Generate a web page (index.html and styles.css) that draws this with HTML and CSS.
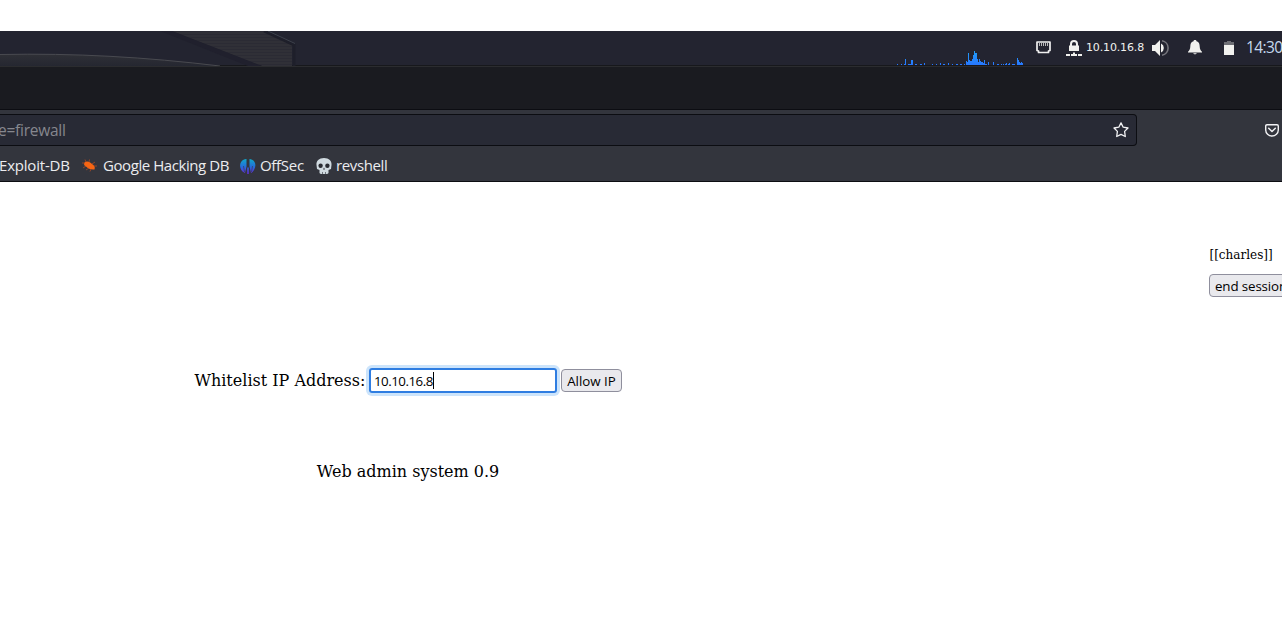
FILE: index.html
```html
<!DOCTYPE html>
<html lang="en">
<head>
<meta charset="utf-8">
<title>Web admin system</title>
<link rel="stylesheet" href="styles.css">
</head>
<body>
<header class="panel">
  <svg class="wallpaper" width="320" height="36" viewBox="0 0 320 36">
    <defs>
      <pattern id="scan" width="4" height="3" patternUnits="userSpaceOnUse"><rect width="4" height="3" fill="#303037"/><rect width="4" height="1" fill="#2b2b34"/></pattern>
      <linearGradient id="hill" x2="0" y2="1"><stop offset="0" stop-color="#2f3036"/><stop offset="1" stop-color="#252731"/></linearGradient>
    </defs>
    <path d="M0 23.5C75 22 145 26 220 35H0Z" fill="url(#hill)"/>
    <path d="M0 23.5C75 22 145 26 220 35" fill="none" stroke="#494a50"/>
    <path d="M172 0H267L292 14V35H262Z" fill="url(#scan)"/>
    <path d="M160 0H172L262 35H248Z" fill="#20202d"/>
    <path d="M264 0L294 14V35" fill="none" stroke="#1e1f2a" stroke-width="3"/>
    <path d="M268 0L295 12.500" fill="none" stroke="#3d414b"/>
  </svg>
  <svg class="graph" id="graph" width="127" height="16" viewBox="0 0 127 16" shape-rendering="crispEdges">
    <defs><linearGradient id="load" gradientUnits="userSpaceOnUse" x1="0" y1="0" x2="0" y2="16"><stop offset="0" stop-color="#20a4f5"/><stop offset="1" stop-color="#2777ff"/></linearGradient></defs>
    <path fill="url(#load)" d="M0 15h1v1h-1zM4 15h1v1h-1zM7 15h1v1h-1zM8 10h1v6h-1zM11 15h1v1h-1zM12 15h1v1h-1zM14 11h2v5h-2zM13 15h1v1h-1zM18 15h2v1h-2zM23 15h2v1h-2zM27 15h1v1h-1zM35 15h1v1h-1zM39 15h1v1h-1zM43 15h1v1h-1zM46 15h2v1h-2zM51 15h1v1h-1zM55 15h1v1h-1zM59 15h2v1h-2zM63 15h2v1h-2zM67 15h1v1h-1zM43 14h1v2h-1zM51 14h1v2h-1zM27 14h1v2h-1z"/>
    <path fill="url(#load)" d="M69 16V12h1v1h1V4h1v7h1v1h2v-2h1V6h1V2h1v2h2v6h1v3h1v-3h1v2h1v1h2v1h1v-3h1v4h2v1zM91 13h1v3h-1zM96 13h1v3h-1zM100 15h2v1h-2zM104 15h1v1h-1zM106 15h1v1h-1zM108 15h1v1h-1zM109 14h1v2h-1zM111 15h1v1h-1zM112 14h1v2h-1zM115 15h3v1h-3zM120 16V9h1v2h1v2h1v1h1v-1h1v1h1v2z"/>
  </svg>
  <svg class="ethernet" width="15" height="13" viewBox="0 0 15 13"><path d="M1 1H14V9.500L12.500 10V11.500H2.500V10L1 9.500Z" fill="none" stroke="#f0f0f0" stroke-width="1.700" stroke-linejoin="round"/><path d="M3.500 2v3M5.500 2v3M7.500 2v3M9.500 2v3M11.500 2v3" stroke="#ddd" stroke-width=".8"/></svg>
  <svg class="vpn" width="16" height="16" viewBox="0 0 16 16"><path d="M5 6V4A3 3 0 0 1 11 4V6" fill="none" stroke="#f1f1ee" stroke-width="2"/><path d="M3 5.500H13V11H3ZM0 14H4V16H0ZM12 14H16V16H12ZM5 14H7V12.500H9V14H11V16H5Z" fill="#f1f1ee"/></svg>
  <span class="vpn-ip">10.10.16.8</span>
  <svg class="volume" width="18" height="16" viewBox="0 0 18 16"><path d="M0 5H3L8 0V16L3 11H0Z" fill="#f1f1ee"/><path d="M9 3.500A5 5 0 0 1 9 12.500Z" fill="#f1f1ee"/><path d="M10 .8A7.300 7.300 0 0 1 10 15.200" fill="none" stroke="#74747b" stroke-width="1.600"/></svg>
  <svg class="bell" width="14" height="15" viewBox="0 0 14 15"><path d="M7 0C8 0 8.400.5 8.500 1.200C11.200 2 11.600 4 11.700 6.500C11.800 9 12.500 10.200 14 11.800V12.500H0V11.800C1.500 10.200 2.200 9 2.300 6.500C2.400 4 2.800 2 5.500 1.200C5.600.5 6 0 7 0ZM5.300 13.200H8.700C8.500 14.500 5.500 14.500 5.300 13.200Z" fill="#f1f1ee"/></svg>
  <svg class="battery" width="10" height="14" viewBox="0 0 10 14"><path d="M0 1H3V0H7V1H10V5H0Z" fill="#6d6e74"/><path d="M0 4H10V14H0Z" fill="#f1f1ee"/></svg>
  <span class="clock">14:30</span>
</header>
<div class="titlebar"></div>
<nav class="toolbar">
  <div class="urlbar"><span>e=firewall</span>
    <svg width="16" height="16" viewBox="0 0 16 16"><path d="M8 .9L10.200 5.200L15 6L11.600 9.400L12.300 14.500L8 12.300L3.700 14.500L4.400 9.400L1 6L5.800 5.200Z" fill="none" stroke="#f2f2f4" stroke-width="1.300" stroke-linejoin="round"/></svg>
  </div>
  <svg class="pocket" width="14" height="13" viewBox="0 0 14 13"><path d="M2 .7H12Q13.300.7 13.300 2V6A6.300 6 0 0 1 .7 6V2Q.7.700 2 .7Z" fill="none" stroke="#f2f2f4" stroke-width="1.400"/><path d="M3.700 4.300L7 7.500L10.300 4.300" fill="none" stroke="#f2f2f4" stroke-width="1.500" stroke-linecap="round" stroke-linejoin="round"/></svg>
</nav>
<div class="bookmarks">
  <span class="label exploit">Exploit-DB</span>
  <svg class="bug" width="15" height="13" viewBox="0 0 15 13"><path d="M2.500 3.500C5 1.500 8 3 10 5C12 6 13.500 8 12.500 10.500C9 11 6 9.500 4 7.500C2 6.500 1.500 5 2.500 3.500Z" fill="#f76513"/><path d="M4 3L3 .5M7 3L7.500.5M10 5L13 3M12 7H15M3 4H0M4 7L1 9M7 9L4 11M9 10L8 12.500" stroke="#b94e22" stroke-width=".7"/></svg>
  <span class="label google">Google Hacking DB</span>
  <svg class="offsec" width="16" height="16" viewBox="0 0 16 16"><defs><linearGradient id="os" x2="0" y2="1"><stop stop-color="#10a8c9"/><stop offset=".5" stop-color="#246fd9"/><stop offset="1" stop-color="#6428db"/></linearGradient></defs><path d="M6.500 1V8.500L5 15C-1.300 12 -1.500 4 4 1.500C5 1 5.700.8 6.500 1ZM9.500 1C15 1.500 17 7 14 12C13 13.500 12 14.500 11 15L9.500 8.500ZM7.200 9.500H8.800V16H7.200Z" fill="url(#os)"/><path d="M3.500 8L4.500 14M12.500 8L11.500 14" stroke="#33353d" stroke-width=".6"/></svg>
  <span class="label off">OffSec</span>
  <svg class="skull" width="16" height="16" viewBox="0 0 16 16"><path d="M8 0C13 0 16 3 15.500 7L15 11L12.500 12V15Q12 16 10.500 16H5.500Q4 16 3.500 15V12L1 11L.5 7C0 3 3 0 8 0Z" fill="#d0dae0"/><ellipse cx="4.600" cy="7.800" rx="2.200" ry="2.200" fill="#2a2c33"/><ellipse cx="11.400" cy="7.800" rx="2.200" ry="2.200" fill="#2a2c33"/><path d="M8 9.500L9 11.500H7ZM6 14H6.600V16H6ZM9.400 14H10V16H9.400Z" fill="#33353d"/></svg>
  <span class="label rev">revshell</span>
</div>
<main class="page">
  <section class="session"><span class="user">[[charles]]</span><button class="btn end">end session</button></section>
  <section class="content">
    <form class="whitelist">
      <span class="serif field-label">Whitelist IP Address:</span>
      <div class="field"><span class="value">10.10.16.8</span><i class="caret"></i></div>
      <button class="btn allow" type="button">Allow IP</button>
    </form>
    <span class="serif version">Web admin system 0.9</span>
  </section>
</main>
</body>
</html>
```
FILE: styles.css
```css
* { box-sizing: border-box; }
body { margin: 0; width: 1282px; height: 633px; overflow: hidden; padding-top: 31px; background: #fff; font-family: "Open Sans", "Noto Sans", sans-serif; }
svg { display: block; flex: none; }
span { white-space: nowrap; }
.panel { height: 36px; display: flex; align-items: flex-start; background: #232430; border-bottom: 1px solid #2b2c2f; box-shadow: inset 0 -1px #17181c; overflow: hidden; }
.graph { margin: 18px 0 0 577px; }
.ethernet { margin: 10px 0 0 12px; }
.vpn { margin: 9px 0 0 15px; }
.vpn-ip { width: 58px; margin: 8px 0 0 4px; font: 11px/17px "DejaVu Sans", sans-serif; letter-spacing: -.15px; color: #f1f1ee; }
.volume { margin: 9px 0 0 8px; }
.bell { margin: 9px 0 0 18px; }
.battery { margin: 10px 0 0 22px; }
.clock { margin: 5px 0 0 12px; font-size: 15.5px; line-height: 22px; letter-spacing: -.6px; color: #c5d9ee; }
.titlebar { height: 42px; background: #1a1b20; }
.toolbar { height: 37px; display: flex; align-items: flex-start; background: #33353d; border-top: 1px solid #0c0d12; }
.urlbar { width: 1137px; height: 32px; margin-top: 4px; padding-right: 7px; display: flex; align-items: center; justify-content: space-between; background: #282a35; border: 1px solid #0c0d12; border-left: 0; border-radius: 0 4px 4px 0; }
.urlbar span { margin-left: -2px; font-size: 15.5px; line-height: 22px; letter-spacing: -.25px; color: #86878e; }
.pocket { margin: 14px 0 0 128px; }
.bookmarks { height: 36px; display: flex; align-items: center; padding-top: 4px; background: #33353d; border-bottom: 1px solid #0c0d12; }
.label { padding-bottom: 2px; font-size: 15px; line-height: 22px; letter-spacing: -.2px; color: #ececef; }
.exploit { width: 71px; margin-left: -1px; }
.bug { margin-left: 12px; }
.google { width: 126px; margin-left: 6px; letter-spacing: -.43px; }
.offsec { margin-left: 11px; }
.off { width: 44px; margin-left: 4px; letter-spacing: -.3px; }
.skull { margin-left: 12px; }
.rev { margin-left: 4px; letter-spacing: -.37px; }
.page { height: 451px; background: #fff; }
.session { display: flex; flex-direction: column; align-items: flex-start; padding: 65px 0 0 1209px; }
.user { margin-left: .5px; font: 12px/17px "DejaVu Serif", serif; color: #000; }
.btn { height: 23px; padding: 0 5px; border: 1px solid #8f8f9d; border-radius: 4px; background: #e9e9ed; color: #000; font: 13.33px/20px "Open Sans", "Noto Sans", sans-serif; white-space: nowrap; }
.end { margin-top: 10px; width: 83px; text-align: left; letter-spacing: -.12px; }
.content { width: 816px; margin-top: 69px; display: flex; flex-direction: column; align-items: center; }
.serif { font: 16px/20px "DejaVu Serif", serif; color: #000; }
.whitelist { display: flex; align-items: center; width: 428px; height: 29px; }
.field-label { width: 170.5px; margin-left: .5px; }
.field { display: flex; align-items: center; width: 188px; height: 25px; margin-left: 4px; padding-left: 3px; border: 2px solid #2f7de1; border-radius: 3px; box-shadow: 0 0 0 3px #cce4fb; }
.value { font-size: 13.33px; line-height: 20px; letter-spacing: -.5px; }
.caret { width: 1px; height: 17px; background: #000; }
.allow { width: 61px; margin-left: 4px; }
.version { margin-top: 67px; }
```
